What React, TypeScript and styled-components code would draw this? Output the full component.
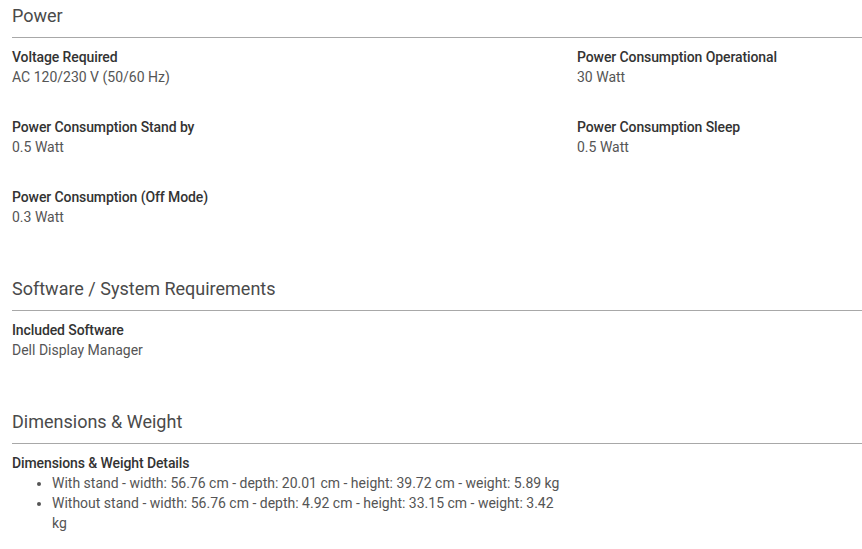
import React from "react";
import styled, { createGlobalStyle } from "styled-components";

interface Spec {
  label: string;
  value?: string;
  items?: string[];
}

interface SpecSection {
  title: string;
  specs: Spec[];
}

const sections: SpecSection[] = [
  {
    title: "Power",
    specs: [
      { label: "Voltage Required", value: "AC 120/230 V (50/60 Hz)" },
      { label: "Power Consumption Operational", value: "30 Watt" },
      { label: "Power Consumption Stand by", value: "0.5 Watt" },
      { label: "Power Consumption Sleep", value: "0.5 Watt" },
      { label: "Power Consumption (Off Mode)", value: "0.3 Watt" },
    ],
  },
  {
    title: "Software / System Requirements",
    specs: [{ label: "Included Software", value: "Dell Display Manager" }],
  },
  {
    title: "Dimensions & Weight",
    specs: [
      {
        label: "Dimensions & Weight Details",
        items: [
          "With stand - width: 56.76 cm - depth: 20.01 cm - height: 39.72 cm - weight: 5.89 kg",
          "Without stand - width: 56.76 cm - depth: 4.92 cm - height: 33.15 cm - weight: 3.42 kg",
        ],
      },
    ],
  },
];

export default function App() {
  return (
    <>
      <GlobalStyle />
      <Page>
        {sections.map((section) => (
          <Section key={section.title}>
            <Heading>{section.title}</Heading>
            <SpecGrid>
              {section.specs.map((spec) => (
                <SpecItem key={spec.label}>
                  <Label>{spec.label}</Label>
                  {spec.value && <Value>{spec.value}</Value>}
                  {spec.items && (
                    <BulletList>
                      {spec.items.map((item) => (
                        <li key={item}>{item}</li>
                      ))}
                    </BulletList>
                  )}
                </SpecItem>
              ))}
            </SpecGrid>
          </Section>
        ))}
      </Page>
    </>
  );
}

const GlobalStyle = createGlobalStyle`
  body {
    margin: 0;
    background: #ffffff;
    font-family: Roboto, "Liberation Sans", sans-serif;
  }
`;

const Page = styled.main`
  display: flex;
  flex-direction: column;
  gap: 50px;
  padding: 4px 0 0 12px;
`;

const Section = styled.section`
  display: flex;
  flex-direction: column;
`;

const Heading = styled.h2`
  margin: 0;
  padding-bottom: 9px;
  border-bottom: 1px solid #a8a8a8;
  font-size: 18px;
  line-height: 24px;
  font-weight: 400;
  color: #4a4a4a;
`;

const SpecGrid = styled.div`
  display: grid;
  grid-template-columns: 550px 1fr;
  column-gap: 15px;
  row-gap: 30px;
  margin-top: 9px;
`;

const SpecItem = styled.div`
  display: flex;
  flex-direction: column;
`;

const Label = styled.div`
  font-size: 14px;
  line-height: 20px;
  font-weight: 500;
  letter-spacing: -0.1px;
  color: #333333;
`;

const Value = styled.div`
  font-size: 14px;
  line-height: 20px;
  color: #555555;
`;

const BulletList = styled.ul`
  margin: 0;
  padding-left: 40px;
  font-size: 14px;
  line-height: 20px;
  color: #555555;
`;
